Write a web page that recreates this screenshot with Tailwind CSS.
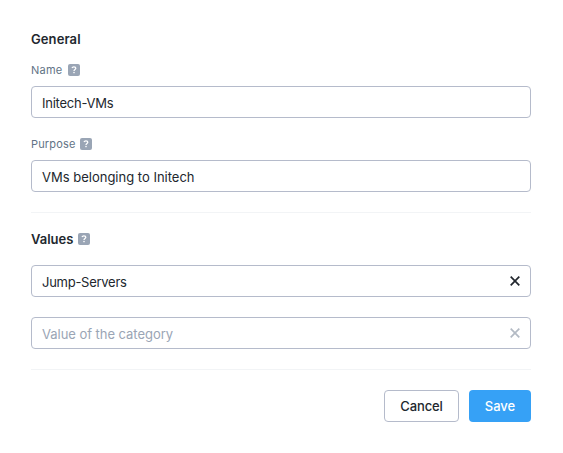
<!DOCTYPE html>
<html lang="en">
<head>
<meta charset="utf-8">
<title>Category</title>
<script src="https://cdn.jsdelivr.net/npm/@tailwindcss/browser@4"></script>
</head>
<body class="bg-white font-['Inter',sans-serif] text-[13px] text-[#22272e]">
<svg class="hidden">
  <symbol id="help" viewBox="0 0 12 12">
    <rect width="12" height="12" rx="2" fill="#9aa5b5"/>
    <path d="M4 4.1C4.3 3.3 5 2.9 5.9 2.9c1.1 0 1.9.6 1.9 1.4 0 1.1-1.8 1.2-1.8 2.6" fill="none" stroke="#fff" stroke-width="1.3"/>
    <rect x="5.3" y="7.9" width="1.4" height="1.3" fill="#fff"/>
  </symbol>
  <symbol id="close" viewBox="0 0 10 10">
    <path d="M.7.7l8.6 8.6M9.3.7L.7 9.3" fill="none" stroke="currentColor" stroke-width="1.7"/>
  </symbol>
</svg>
<form class="flex w-[562px] flex-col px-[31px] pt-[29px]">
  <h2 class="h-5 leading-5 font-semibold tracking-[0.1px]">General</h2>
  <div class="mt-[15px] flex h-3 items-center gap-[5px] text-[11px] leading-3 tracking-[0.25px] text-[#627386]"><span>Name</span><svg class="size-3"><use href="#help"/></svg></div>
  <div class="mt-2.5 flex h-8 items-center rounded border border-[#b5bbcb] px-2.5 pt-1 tracking-[-0.25px]"><span>Initech-VMs</span></div>
  <div class="mt-5 flex h-3 items-center gap-[5px] text-[11px] leading-3 tracking-[0.15px] text-[#627386]"><span>Purpose</span><svg class="size-3"><use href="#help"/></svg></div>
  <div class="mt-2.5 flex h-8 items-center rounded border border-[#b5bbcb] px-2.5 pt-1"><span>VMs belonging to Initech</span></div>
  <div class="mt-5 h-px bg-[#f2f4f6]"></div>
  <div class="mt-5 flex h-3 items-center gap-[5px]"><h2 class="leading-5 font-semibold">Values</h2><svg class="size-3"><use href="#help"/></svg></div>
  <div class="mt-5 flex h-8 items-center justify-between rounded border border-[#b5bbcb] px-2.5"><span class="pt-1 tracking-[-0.27px]">Jump-Servers</span><svg class="size-2.5"><use href="#close"/></svg></div>
  <div class="mt-5 flex h-8 items-center justify-between rounded border border-[#b5bbcb] px-2.5 text-[#9aa5b5]"><span class="pt-1 tracking-[-0.04px]">Value of the category</span><svg class="size-2.5 text-[#b3bac4]"><use href="#close"/></svg></div>
  <div class="mt-5 h-px bg-[#f2f4f6]"></div>
  <div class="mt-5 flex justify-end gap-2.5">
    <button type="button" class="h-8 w-[75px] rounded border border-[#b5bbcb] pt-0.5 font-medium tracking-[-0.1px]">Cancel</button>
    <button type="button" class="h-8 w-[62px] rounded bg-[#36a1f6] pt-0.5 font-medium text-white">Save</button>
  </div>
</form>
</body>
</html>
